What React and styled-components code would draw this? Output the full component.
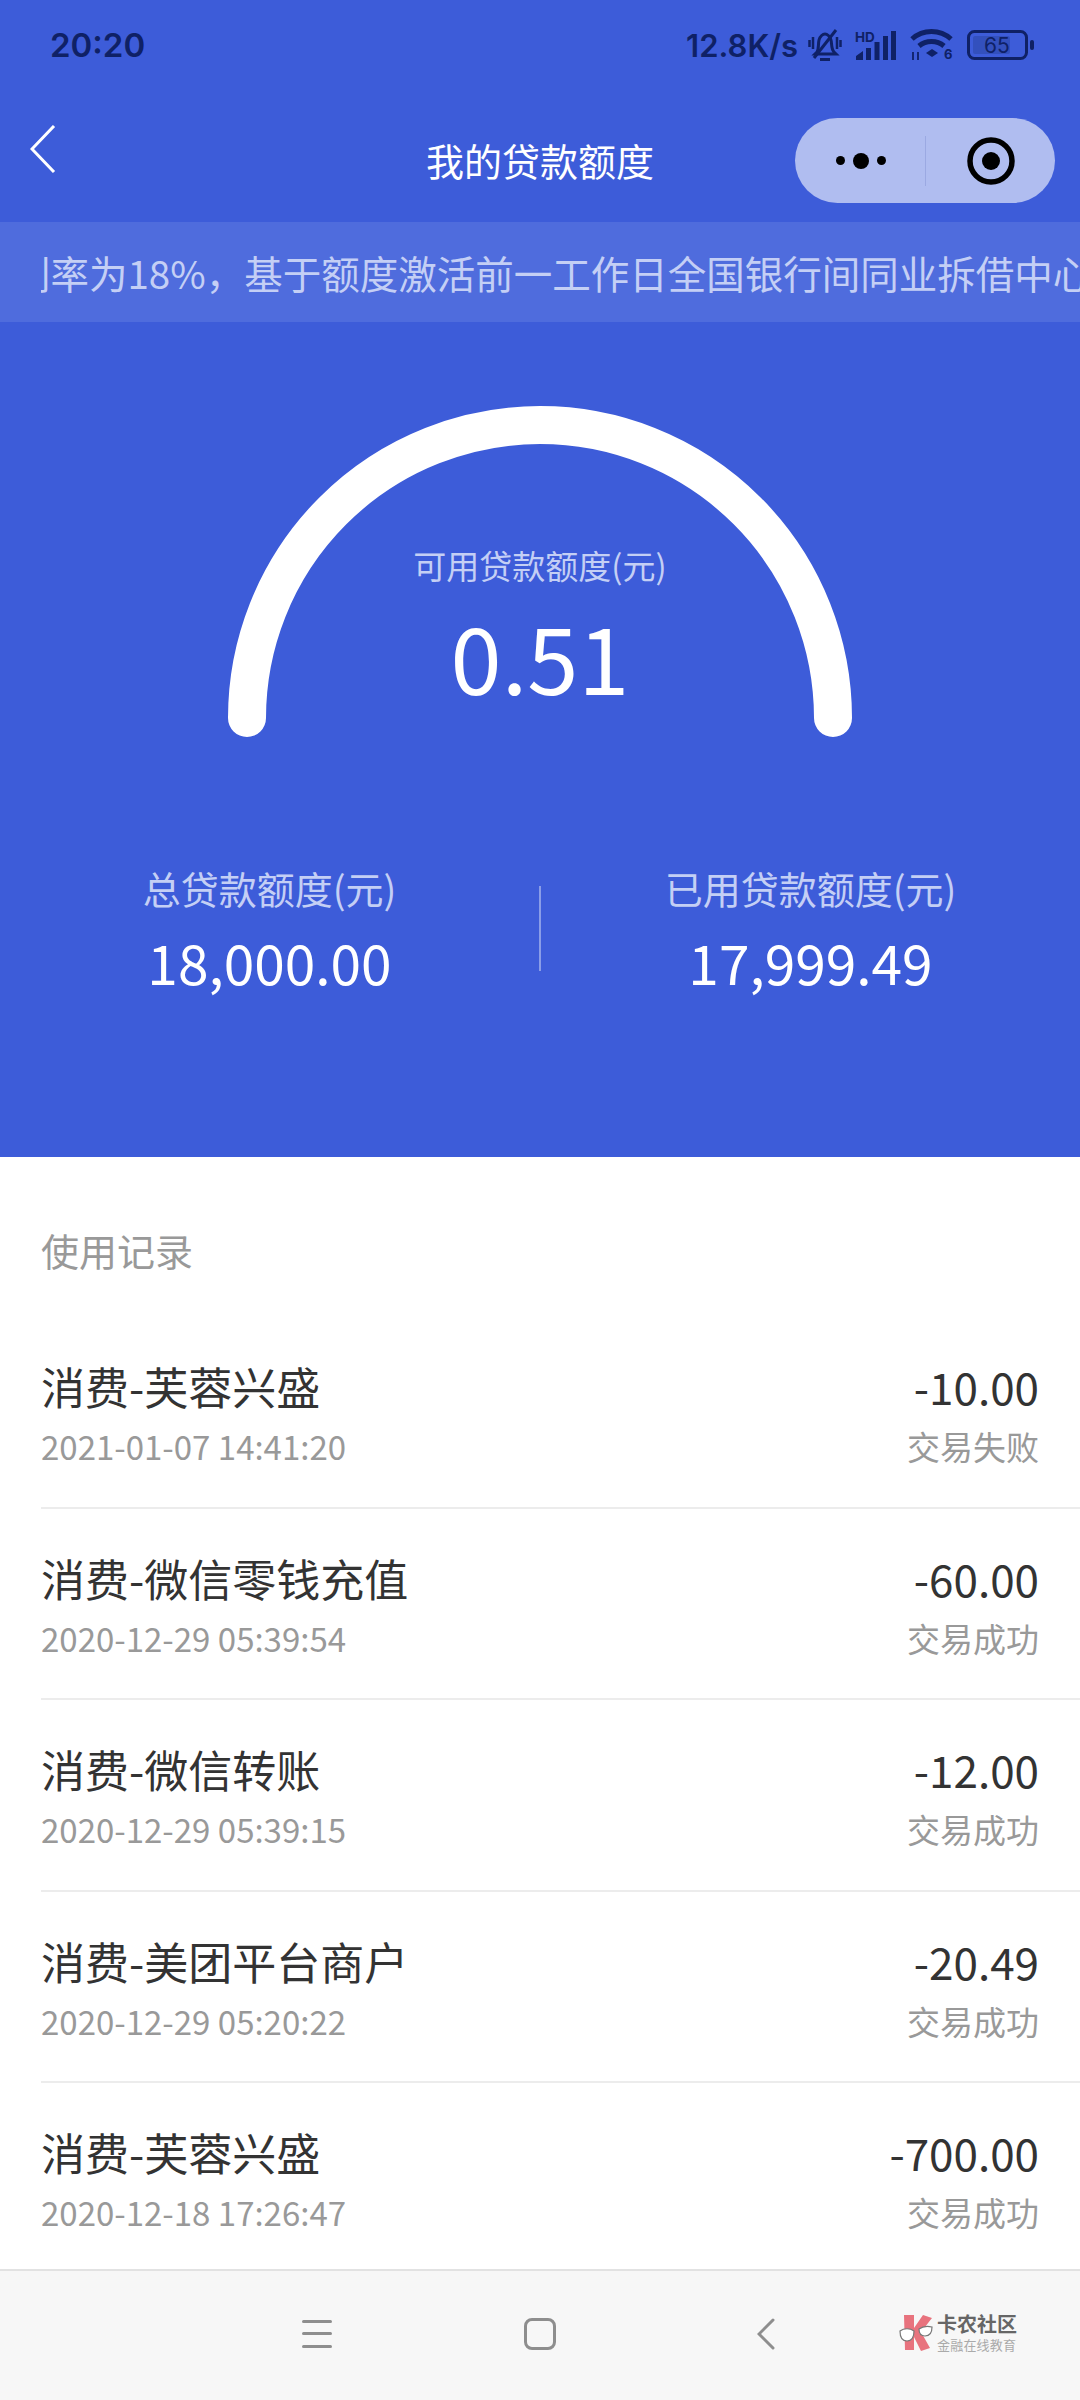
import React from 'react';
import styled, { createGlobalStyle } from 'styled-components';

const GlobalStyle = createGlobalStyle`
    html, body {
        margin: 0;
        padding: 0;
        background: #fff;
        font-family: "Noto Sans CJK SC", "Noto Sans", sans-serif;
    }
`;

const records = [
    { name: '消费-芙蓉兴盛', time: '2021-01-07 14:41:20', amount: '-10.00', status: '交易失败' },
    { name: '消费-微信零钱充值', time: '2020-12-29 05:39:54', amount: '-60.00', status: '交易成功' },
    { name: '消费-微信转账', time: '2020-12-29 05:39:15', amount: '-12.00', status: '交易成功' },
    { name: '消费-美团平台商户', time: '2020-12-29 05:20:22', amount: '-20.49', status: '交易成功' },
    { name: '消费-芙蓉兴盛', time: '2020-12-18 17:26:47', amount: '-700.00', status: '交易成功' },
];

const BellOff = () => (
    <svg width="34" height="33" viewBox="0 0 34 33" fill="none" stroke="#0f2166" strokeWidth="3">
        <path d="M9 23c2-3 1-8 2-12 1-4 4-6 6-6s5 2 6 6c1 4 0 9 3 12l2 2H7z" />
        <path d="M28 1L6 29" />
        <path d="M12 30.5h10" strokeWidth="3" />
        <path d="M1.5 11v7M5 8v12M29 8v12M32.5 11v7" strokeWidth="2.5" />
    </svg>
);

const SignalIcon = () => (
    <svg width="42" height="31" viewBox="0 0 42 31" fill="#0f2166">
        <text x="0" y="12" fontSize="13.5" fontWeight="700" fontFamily="Inter, sans-serif">HD</text>
        <path d="M1 30v-4l7-5v9zM11 30V18h5v12zM19.5 30V12h5v18zM28 30V6h5v24zM36 30V1h5v29z" />
    </svg>
);

const WifiIcon = () => (
    <svg width="44" height="34" viewBox="0 0 44 34" fill="none" stroke="#0f2166" strokeWidth="5" style={{ overflow: 'visible' }}>
        <path d="M2 11c11-10 28-10 39 0" />
        <path d="M9 18c7-6 18-6 25 0" />
        <path d="M22 21l-6 4 6 4 6-4z" fill="#0f2166" strokeWidth="0" />
        <path d="M3 24v8M8 24v8" strokeWidth="1.8" />
        <text x="34" y="31" fontSize="13" fontWeight="700" fontFamily="Inter, sans-serif" fill="#0f2166" stroke="none">6</text>
    </svg>
);

const BatteryIcon = () => (
    <svg width="68" height="30" viewBox="0 0 68 30" fill="none">
        <rect x="1.5" y="1.5" width="58" height="27" rx="6" stroke="#0f2166" strokeWidth="3" />
        <rect x="6" y="6" width="37" height="18" rx="2" fill="#3350bd" />
        <rect x="63" y="10" width="4" height="10" rx="2" fill="#0f2166" />
        <text x="30" y="23" fontSize="21" textAnchor="middle" fontFamily="Inter, sans-serif" fill="#0f2166">65</text>
    </svg>
);

const BackIcon = () => (
    <svg width="26" height="48" viewBox="0 0 26 48" fill="none" stroke="#fff" strokeWidth="3">
        <path d="M24 1L2 24l22 23" />
    </svg>
);

const TargetIcon = () => (
    <svg width="48" height="48" viewBox="0 0 48 48">
        <circle cx="24" cy="24" r="21" fill="none" stroke="#000" strokeWidth="5.5" />
        <circle cx="24" cy="24" r="9" fill="#000" />
    </svg>
);

const GaugeArc = () => (
    <svg width="624" height="331" viewBox="0 0 624 331" fill="none">
        <path d="M19 312A293 293 0 0 1 605 312" stroke="#fff" strokeWidth="38" strokeLinecap="round" />
    </svg>
);

const LogoMark = () => (
    <svg width="34" height="38" viewBox="0 0 34 38">
        <path d="M5 1h10v13l9-13 9 3-11 14 9 16-9 3-7-14v13H6z" fill="#e8737e" />
        <path d="M1 17c4-3 10-3 14 0 0 6-2 10-7 10S1 23 1 17z" fill="#fff" stroke="#777" strokeWidth="1.2" />
        <path d="M20 15c4-3 9-3 13-2 0 5-2 9-7 9s-6-3-6-7z" fill="#fff" stroke="#777" strokeWidth="1.2" />
    </svg>
);

const App = () => (
    <Page>
        <GlobalStyle />
        <Hero>
            <StatusBar>
                <Clock>20:20</Clock>
                <StatusRight>
                    <Speed>12.8K/s</Speed>
                    <BellOff />
                    <SignalIcon />
                    <WifiIcon />
                    <BatteryIcon />
                </StatusRight>
            </StatusBar>

            <NavBar>
                <BackButton><BackIcon /></BackButton>
                <NavTitle>我的贷款额度</NavTitle>
                <Capsule>
                    <MoreDots>
                        <Dot $size={9} />
                        <Dot $size={16} />
                        <Dot $size={9} />
                    </MoreDots>
                    <CapsuleDivider />
                    <CapsuleTarget><TargetIcon /></CapsuleTarget>
                </Capsule>
            </NavBar>

            <NoticeBar>
                <NoticeClip>
                    <NoticeText>利率为18%，基于额度激活前一工作日全国银行间同业拆借中心公布的贷款市场报价利率</NoticeText>
                </NoticeClip>
            </NoticeBar>

            <Gauge>
                <GaugeArc />
                <GaugeCenter>
                    <GaugeLabel>可用贷款额度(元)</GaugeLabel>
                    <GaugeValue>0.51</GaugeValue>
                </GaugeCenter>
            </Gauge>

            <Stats>
                <StatColumn>
                    <StatLabel>总贷款额度(元)</StatLabel>
                    <StatValue>18,000.00</StatValue>
                </StatColumn>
                <StatDivider />
                <StatColumn>
                    <StatLabel>已用贷款额度(元)</StatLabel>
                    <StatValue>17,999.49</StatValue>
                </StatColumn>
            </Stats>
        </Hero>

        <RecordSection>
            <RecordHeading>使用记录</RecordHeading>
            {records.map(item => (
                <RecordRow key={item.time}>
                    <RecordLine>
                        <RecordName>{item.name}</RecordName>
                        <RecordAmount>{item.amount}</RecordAmount>
                    </RecordLine>
                    <RecordLine>
                        <RecordMeta>{item.time}</RecordMeta>
                        <RecordMeta>{item.status}</RecordMeta>
                    </RecordLine>
                </RecordRow>
            ))}
        </RecordSection>

        <BottomNav>
            <MenuKey>
                <span /><span /><span />
            </MenuKey>
            <HomeKey />
            <BackKey>
                <svg width="18" height="32" viewBox="0 0 18 32" fill="none" stroke="#8e8e8e" strokeWidth="3" strokeLinecap="round">
                    <path d="M16 2L2 16l14 14" />
                </svg>
            </BackKey>
            <Watermark>
                <LogoMark />
                <WatermarkText>
                    <WatermarkName>卡农社区</WatermarkName>
                    <WatermarkSlogan>金融在线教育</WatermarkSlogan>
                </WatermarkText>
            </Watermark>
        </BottomNav>
    </Page>
);
export default App;

const Page = styled.div`
    width: 1080px;
    height: 2400px;
    display: flex;
    flex-direction: column;
    overflow: hidden;
    background: #fff;
`

const Hero = styled.div`
    height: 1157px;
    flex: none;
    background: #3d5cd9;
    display: flex;
    flex-direction: column;
`

const StatusBar = styled.div`
    height: 90px;
    padding: 0 45px 0 50px;
    display: flex;
    align-items: center;
    justify-content: space-between;
    color: #0f2166;
`

const Clock = styled.div`
    font-family: Inter, sans-serif;
    font-size: 33px;
    font-weight: 600;
`

const StatusRight = styled.div`
    display: flex;
    align-items: center;
    gap: 13px;
`

const Speed = styled.div`
    font-family: Inter, sans-serif;
    font-size: 31px;
    font-weight: 600;
    margin-right: -3px;
`

const NavBar = styled.div`
    height: 132px;
    padding: 0 25px 0 30px;
    display: flex;
    align-items: center;
    justify-content: space-between;
    position: relative;
`

const BackButton = styled.div`
    display: flex;
    margin-top: -15px;
`

const NavTitle = styled.div`
    position: absolute;
    left: 0;
    right: 0;
    top: 43px;
    text-align: center;
    color: #fff;
    font-size: 38px;
    line-height: 54px;
`

const Capsule = styled.div`
    width: 260px;
    height: 85px;
    margin-top: 9px;
    border-radius: 43px;
    background: #b0bdf0;
    display: flex;
    align-items: center;
    position: relative;
    z-index: 1;
`

const MoreDots = styled.div`
    width: 130px;
    padding-left: 1px;
    box-sizing: border-box;
    display: flex;
    align-items: center;
    justify-content: center;
    gap: 8px;
`

const Dot = styled.span`
    width: ${p => p.$size}px;
    height: ${p => p.$size}px;
    border-radius: 50%;
    background: #000;
`

const CapsuleDivider = styled.div`
    width: 1px;
    height: 50px;
    background: #9ba9e2;
`

const CapsuleTarget = styled.div`
    flex: 1;
    display: flex;
    justify-content: center;
`

const NoticeBar = styled.div`
    height: 100px;
    flex: none;
    padding-left: 41px;
    background: #4f6cdd;
    display: flex;
    align-items: center;
`

const NoticeClip = styled.div`
    flex: 1;
    overflow: hidden;
`

const NoticeText = styled.div`
    margin-left: -29px;
    white-space: nowrap;
    color: #c4cff5;
    font-size: 38.5px;
    line-height: 54px;
`

const Gauge = styled.div`
    width: 624px;
    height: 331px;
    margin: 84px auto 0;
    position: relative;
    display: flex;
`

const GaugeCenter = styled.div`
    position: absolute;
    left: 0;
    right: 0;
    top: 134px;
    display: flex;
    flex-direction: column;
    align-items: center;
`

const GaugeLabel = styled.div`
    color: #c4cff5;
    font-size: 33px;
    line-height: 50px;
`

const GaugeValue = styled.div`
    color: #fff;
    font-size: 92px;
    line-height: 120px;
    margin-top: 5px;
`

const Stats = styled.div`
    margin-top: 126px;
    display: grid;
    grid-template-columns: 1fr 2px 1fr;
    align-items: center;
`

const StatColumn = styled.div`
    display: flex;
    flex-direction: column;
    align-items: center;
`

const StatLabel = styled.div`
    color: #c4cff5;
    font-size: 38px;
    line-height: 50px;
`

const StatValue = styled.div`
    color: #fff;
    font-size: 55px;
    line-height: 76px;
    margin-top: 10px;
`

const StatDivider = styled.div`
    width: 2px;
    height: 85px;
    margin-bottom: 6px;
    background: rgba(255, 255, 255, 0.4);
`

const RecordSection = styled.div`
    flex: 1;
    min-height: 0;
    overflow: hidden;
    padding-left: 41px;
    background: #fff;
`

const RecordHeading = styled.div`
    padding-top: 63px;
    height: 60px;
    margin-bottom: 37px;
    color: #999;
    font-size: 38px;
    line-height: 60px;
`

const RecordRow = styled.div`
    height: 191.5px;
    box-sizing: border-box;
    padding: 39px 41px 0 0;
    border-bottom: 2px solid #ececec;

    &:last-child {
        border-bottom: none;
    }
`

const RecordLine = styled.div`
    display: flex;
    justify-content: space-between;
    align-items: center;

    & + & {
        margin-top: 8px;
    }
`

const RecordName = styled.div`
    color: #333;
    font-size: 44px;
    line-height: 60px;
`

const RecordAmount = styled.div`
    color: #333;
    font-size: 44px;
    line-height: 60px;
`

const RecordMeta = styled.div`
    color: #999;
    font-size: 33px;
    line-height: 44px;
`

const BottomNav = styled.div`
    height: 131px;
    flex: none;
    box-sizing: border-box;
    border-top: 2px solid #e2e2e2;
    background: #f7f7f7;
    padding-left: 302px;
    display: flex;
    align-items: center;
    position: relative;
    z-index: 1;
`

const MenuKey = styled.div`
    width: 30px;
    height: 28px;
    display: flex;
    flex-direction: column;
    justify-content: space-between;
    margin-bottom: 4px;

    span {
        height: 3px;
        border-radius: 2px;
        background: #8e8e8e;
    }
`

const HomeKey = styled.div`
    width: 32px;
    height: 32px;
    box-sizing: border-box;
    margin-left: 192px;
    margin-bottom: 4px;
    border: 3px solid #8e8e8e;
    border-radius: 8px;
`

const BackKey = styled.div`
    display: flex;
    margin-left: 201px;
    margin-bottom: 4px;
`

const Watermark = styled.div`
    margin-left: 124px;
    margin-bottom: 6px;
    display: flex;
    align-items: center;
    gap: 4px;
`

const WatermarkText = styled.div`
    display: flex;
    flex-direction: column;
    gap: 2px;
`

const WatermarkName = styled.div`
    color: #666;
    font-size: 20px;
    font-weight: 700;
    line-height: 22px;
`

const WatermarkSlogan = styled.div`
    color: #aaa;
    font-size: 13px;
    letter-spacing: 0.2px;
    line-height: 16px;
`
